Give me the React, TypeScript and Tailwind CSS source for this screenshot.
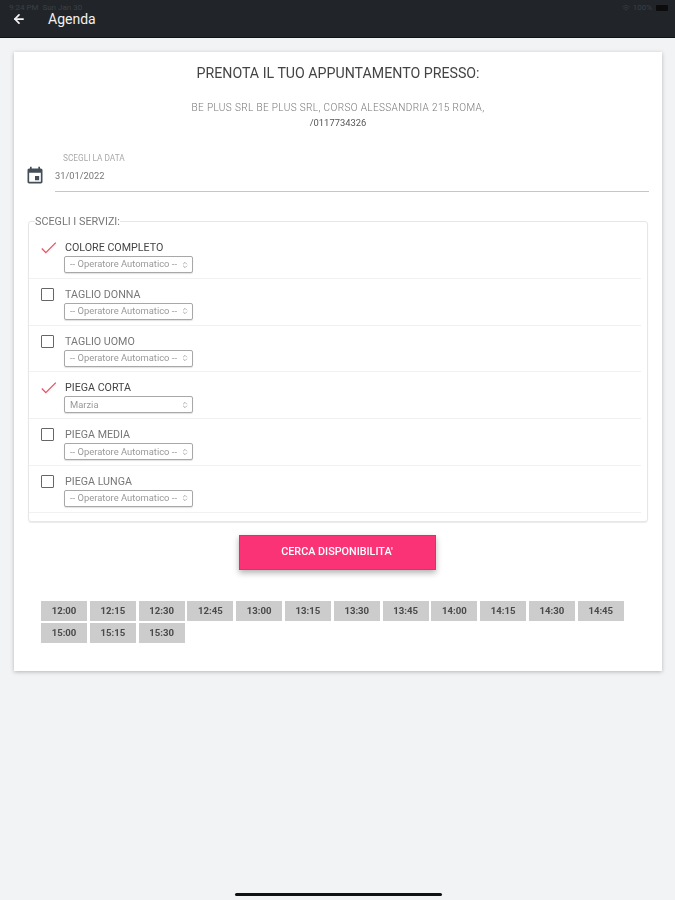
import { ArrowLeft, ChevronsUpDown, Wifi } from "lucide-react";

const services = [
  { name: "COLORE COMPLETO", checked: true, operator: "-- Operatore Automatico --" },
  { name: "TAGLIO DONNA", checked: false, operator: "-- Operatore Automatico --" },
  { name: "TAGLIO UOMO", checked: false, operator: "-- Operatore Automatico --" },
  { name: "PIEGA CORTA", checked: true, operator: "Marzia" },
  { name: "PIEGA MEDIA", checked: false, operator: "-- Operatore Automatico --" },
  { name: "PIEGA LUNGA", checked: false, operator: "-- Operatore Automatico --" },
];

const times = [
  "12:00", "12:15", "12:30", "12:45", "13:00", "13:15", "13:30", "13:45",
  "14:00", "14:15", "14:30", "14:45", "15:00", "15:15", "15:30",
];

function ServiceRow({ name, checked, operator }: { name: string; checked: boolean; operator: string }) {
  return (
    <div className="flex h-[46.8px] border-b border-[#f1f1f1]">
      <div className="w-[36px] shrink-0 pl-[12px] pt-[9px]">
        {checked ? (
          <svg width="16" height="12" viewBox="0 0 16 12" fill="none" className="mt-[1px]">
            <path d="M0.8 6.5L4.8 10.6L14.8 0.6" stroke="#ef4f5f" strokeWidth="1.3" />
          </svg>
        ) : (
          <div className="w-[13px] h-[13px] border-[1.5px] border-[#666] rounded-[1px]" />
        )}
      </div>
      <div className="pt-[9px]">
        <div className={`text-[10.7px] leading-[14px] whitespace-nowrap ${checked ? "text-[#444]" : "text-[#777]"}`}>{name}</div>
        <div className="mt-[1px] -ml-[1px] flex items-center justify-between w-[129px] h-[17px] pl-[5px] pr-[3px] bg-white border border-[#a8a8a8] rounded-[2px] shadow-[0_1px_1px_rgba(0,0,0,0.12)]">
          <span className="text-[9.4px] text-[#999] whitespace-nowrap">{operator}</span>
          <ChevronsUpDown size={8} className="text-[#888] shrink-0" />
        </div>
      </div>
    </div>
  );
}

export default function App() {
  return (
    <div className="w-[675px] h-[900px] bg-[#f1f3f5] overflow-hidden">
      <div className="relative w-[675px] h-[900px] font-['Roboto',sans-serif] blur-[0.45px]">
        <header className="relative h-[38px] bg-[#212529] border-b border-[#111]">
          <div className="flex items-center justify-between pl-[9px] pr-[4px] pt-[4px] text-[8px] leading-[8px] text-[#3b4045]">
            <span>9:24 PM&nbsp;&nbsp;Sun Jan 30</span>
            <span className="flex items-center gap-[3px] pr-[3px]">
              <Wifi size={8} />
              100%
              <span className="ml-[1px] w-[12px] h-[6px] bg-[#0c0c0c] rounded-[1px]" />
            </span>
          </div>
          <div className="absolute left-[12px] top-[12px] h-[14px] flex items-center">
            <ArrowLeft size={14} strokeWidth={3} className="text-[#f4f4f4]" />
            <span className="ml-[22px] text-[14px] leading-[14px] text-[#f0f0f0]">Agenda</span>
          </div>
        </header>

        <main className="ml-[14px] mt-[14px] w-[648px] h-[619px] bg-white shadow-[0_1px_4px_rgba(0,0,0,0.25)] px-[14px] pt-[13px]">
          <h1 className="text-center text-[14.2px] leading-[16px] text-[#444]">PRENOTA IL TUO APPUNTAMENTO PRESSO:</h1>
          <p className="mt-[19px] text-center text-[10px] leading-[15px] tracking-[0.38px] font-light text-[#777]">
            BE PLUS SRL BE PLUS SRL, CORSO ALESSANDRIA 215 ROMA,
            <br />
            <span className="text-[9.4px] tracking-normal font-normal text-[#555]">/0117734326</span>
          </p>

          <div className="mt-[19px] flex h-[43px]">
            <div className="w-[27px] shrink-0 pt-[17px]">
              <svg width="20" height="20" viewBox="0 0 24 24" fill="#444e58" className="-ml-[3.5px]">
                <path d="M17 12h-5v5h5v-5zM16 1v2H8V1H6v2H5c-1.11 0-1.99.9-1.99 2L3 19c0 1.1.89 2 2 2h14c1.1 0 2-.9 2-2V5c0-1.1-.9-2-2-2h-1V1h-2zm3 18H5V8h14v11z" />
              </svg>
            </div>
            <div className="flex-1 -mr-[1px] pt-[4px] border-b border-[#c6c6c6]">
              <div className="pl-[8px] text-[8.3px] leading-[10px] text-[#aaa]">SCEGLI LA DATA</div>
              <div className="mt-[7px] text-[9.3px] leading-[12px] text-[#777]">31/01/2022</div>
            </div>
          </div>

          <fieldset className="mt-[24px] h-[306px] border border-[#e6e6e6] rounded-[3px] shadow-[0_1px_1px_rgba(0,0,0,0.08)] pr-[6px]">
            <legend className="ml-[6px] text-[10.8px] leading-[11px] text-[#777]">SCEGLI I SERVIZI:</legend>
            <div className="pt-[5px]">
              {services.map((s) => (
                <ServiceRow key={s.name} {...s} />
              ))}
            </div>
          </fieldset>

          <div className="mt-[13px] -ml-[2px] flex justify-center">
            <button className="w-[197px] h-[35px] bg-[#fa3377] border border-[#e82a69] text-white text-[10.8px] font-medium shadow-[0_3px_6px_rgba(0,0,0,0.3)]">
              CERCA DISPONIBILITA'
            </button>
          </div>

          <div className="mt-[31px] ml-[13px] flex flex-wrap w-[600px] gap-x-[2.8px] gap-y-[2px]">
            {times.map((t) => (
              <div key={t} className="w-[46px] h-[20px] flex items-center justify-center bg-[#cccccc] text-[9.6px] font-bold text-[#4a4a4a]">
                {t}
              </div>
            ))}
          </div>
        </main>

        <div className="absolute left-[235px] bottom-[4px] w-[207px] h-[3px] rounded-full bg-[#111]" />
      </div>
    </div>
  );
}
